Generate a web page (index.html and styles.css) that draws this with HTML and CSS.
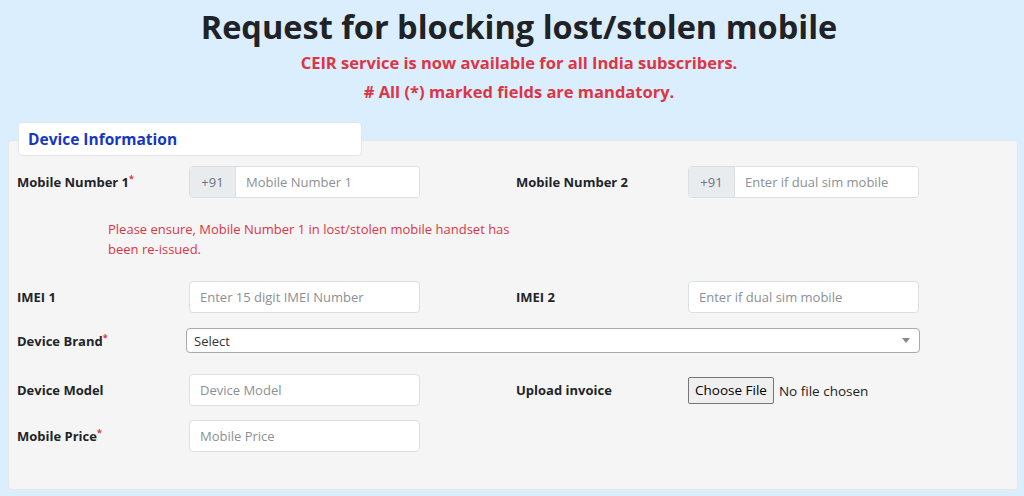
FILE: index.html
```
<!DOCTYPE html>
<html lang="en">
<head>
    <meta charset="UTF-8">
    <meta name="viewport" content="width=device-width, initial-scale=1.0">
    <title>Block Stolen/Lost Mobile</title>
    <link rel="stylesheet" href="styles.css">
</head>
<body>
    <div class="header">
        <h1 class="title">Request for blocking lost/stolen mobile</h1>
        <p class="notice">CEIR service is now available for all India subscribers.</p>
        <p class="notice">#  All (*) marked fields are mandatory.</p>
    </div>

    <div class="panel">
        <div class="legend">Device Information</div>

        <div class="row first">
            <div class="field">
                <label class="lbl">Mobile Number 1<sup>*</sup></label>
                <div class="input-group">
                    <span class="prefix">+91</span>
                    <input type="text" placeholder="Mobile Number 1">
                </div>
            </div>
            <div class="field">
                <label class="lbl">Mobile Number 2</label>
                <div class="input-group">
                    <span class="prefix">+91</span>
                    <input type="text" placeholder="Enter if dual sim mobile">
                </div>
            </div>
        </div>

        <p class="hint">Please ensure, Mobile Number 1 in lost/stolen mobile handset has been re-issued.</p>

        <div class="row">
            <div class="field">
                <label class="lbl">IMEI 1</label>
                <input class="control" type="text" placeholder="Enter 15 digit IMEI Number">
            </div>
            <div class="field">
                <label class="lbl">IMEI 2</label>
                <input class="control" type="text" placeholder="Enter if dual sim mobile">
            </div>
        </div>

        <div class="row brand">
            <label class="lbl">Device Brand<sup>*</sup></label>
            <div class="select-box">
                <span>Select</span>
                <span class="arrow"></span>
            </div>
        </div>

        <div class="row">
            <div class="field">
                <label class="lbl">Device Model</label>
                <input class="control" type="text" placeholder="Device Model">
            </div>
            <div class="field">
                <label class="lbl">Upload invoice</label>
                <input class="file" type="file">
            </div>
        </div>

        <div class="row">
            <div class="field">
                <label class="lbl">Mobile Price<sup>*</sup></label>
                <input class="control" type="text" placeholder="Mobile Price">
            </div>
        </div>
    </div>
</body>
</html>
```

FILE: styles.css
```
* {
  margin: 0;
  padding: 0;
  box-sizing: border-box;
}
body {
  background-color: #dbeefd;
  font-family: "Open Sans", "Noto Sans", sans-serif;
  font-size: 13px;
  color: #212529;
  padding-top: 6px;
}
.header {
  text-align: center;
  padding-left: 14px;
}
.title {
  font-size: 32.5px;
  font-weight: 700;
  line-height: 42px;
  color: #1f2327;
}
.notice {
  color: #dc3545;
  font-weight: 700;
  font-size: 16.5px;
  line-height: 29px;
}

.panel {
  margin: 34px 6px 0 8px;
  background-color: #f5f5f5;
  border: 1px solid #e6e8ea;
  border-radius: 4px;
  padding: 0 0 38px 8px;
  height: 350px;
}
.legend {
  width: 344px;
  height: 34px;
  margin: -19px 0 0 1px;
  background: #fff;
  border: 1px solid #e3e6e8;
  border-radius: 4px;
  color: #1537c2;
  font-weight: 700;
  font-size: 15.5px;
  line-height: 32px;
  padding-left: 9px;
}

.row {
  display: flex;
  align-items: center;
  margin-bottom: 14px;
}
.row.first {
  margin-top: 10px;
  margin-bottom: 0;
}
.row.brand {
  margin-bottom: 21px;
  margin-top: 15px;
}
.field {
  display: flex;
  align-items: center;
  width: 499px;
  flex-shrink: 0;
}
.lbl {
  width: 172px;
  flex-shrink: 0;
  font-weight: 700;
}
.lbl sup {
  color: #dc3545;
  font-size: 9px;
}
.brand .lbl {
  width: 169px;
}

.input-group {
  display: flex;
  width: 231px;
  height: 32px;
  border: 1px solid #dcdfe2;
  border-radius: 4px;
  background: #fff;
  overflow: hidden;
}
.prefix {
  width: 46px;
  background: #e9ecef;
  color: #6c757d;
  border-right: 1px solid #dcdfe2;
  display: flex;
  align-items: center;
  justify-content: center;
}
.input-group input,
.control {
  border: none;
  font: inherit;
  color: #495057;
  padding: 0 10px;
  outline: none;
  background: #fff;
}
.input-group input {
  flex: 1;
  min-width: 0;
}
.control {
  width: 231px;
  height: 32px;
  border: 1px solid #dcdfe2;
  border-radius: 4px;
}
::placeholder {
  color: #8b9096;
}

.hint {
  color: #dc3545;
  margin: 21px 0 22px 91px;
  width: 410px;
  line-height: 20px;
}

.select-box {
  width: 734px;
  height: 25px;
  background: #fff;
  border: 1px solid #a9a9a9;
  border-radius: 4px;
  display: flex;
  align-items: center;
  justify-content: space-between;
  padding: 0 9px 0 7px;
  color: #333;
}
.arrow {
  border-left: 4px solid transparent;
  border-right: 4px solid transparent;
  border-top: 5px solid #888;
}

.file {
  font-family: "Open Sans", "Noto Sans", sans-serif;
  font-size: 13.5px;
  color: #222;
}
.file::file-selector-button {
  font: inherit;
  padding: 2px 6px;
  margin-right: 5px;
  height: 27px;
  background: #efefef;
  border: 1px solid #767676;
  border-radius: 2px;
}
```
